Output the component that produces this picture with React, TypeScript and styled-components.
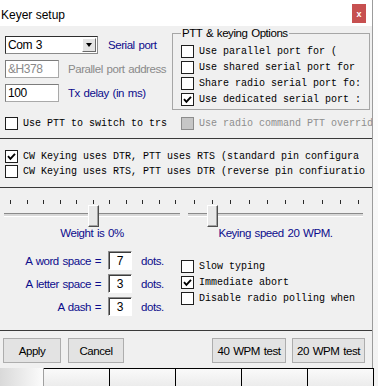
import React from 'react';
import styled, { createGlobalStyle } from 'styled-components';

const GlobalStyle = createGlobalStyle`
  html, body {
    margin: 0;
    padding: 0;
    background: #fff;
  }
  body {
    font-family: "Liberation Sans", Arial, sans-serif;
    color: #000;
  }
`;

const Screen = styled.div`
  width: 378px;
  height: 386px;
  overflow: hidden;
  display: flex;
  flex-direction: column;
`;

const TopArea = styled.div`
  display: flex;
  height: 368px;
  flex-shrink: 0;
`;

const Dialog = styled.div`
  width: 373px;
  box-sizing: border-box;
  border-right: 1px solid #9c9c9c;
  background: #f0f0f0;
  display: flex;
  flex-direction: column;
  flex-shrink: 0;
`;

const SideStrip = styled.div`
  flex: 1;
  background: linear-gradient(#ffffff, #f3f3f3);
`;

const TitleBar = styled.div`
  height: 26px;
  flex-shrink: 0;
  background: #fff;
  display: flex;
  justify-content: space-between;
  align-items: flex-start;
  padding: 0 6px 0 1px;
  box-sizing: border-box;
`;

const Title = styled.div`
  font-size: 12px;
  line-height: 14px;
  margin-top: 8px;
`;

const CloseButton = styled.div`
  width: 14px;
  height: 19px;
  margin-top: 4px;
  background: #c75050;
  color: #fff;
  font: bold 9px "Liberation Sans", Arial, sans-serif;
  display: flex;
  align-items: center;
  justify-content: center;
`;

const Rule = styled.div`
  height: 1px;
  flex-shrink: 0;
  background: #3a3a3a;
`;

const Label = styled.span<{ $tone?: 'blue' | 'gray' | 'black' }>`
  font-size: 11.5px;
  letter-spacing: -0.45px;
  word-spacing: 1px;
  white-space: nowrap;
  color: ${p => (p.$tone === 'gray' ? '#8a8a8a' : p.$tone === 'black' ? '#000' : '#0c0c8c')};
`;

const MonoText = styled.span<{ $disabled?: boolean }>`
  font-family: "Liberation Mono", "DejaVu Sans Mono", monospace;
  font-size: 10px;
  white-space: nowrap;
  overflow: hidden;
  color: ${p => (p.$disabled ? '#8e8e8e' : '#000')};
`;

const CheckRow = styled.div<{ $h?: number; $w?: number }>`
  display: flex;
  align-items: center;
  height: ${p => p.$h ?? 16}px;
  width: ${p => (p.$w ? `${p.$w}px` : 'auto')};
  overflow: hidden;
  flex-shrink: 0;
`;

const Box = styled.span<{ $disabled?: boolean }>`
  width: 13px;
  height: 13px;
  box-sizing: border-box;
  flex-shrink: 0;
  margin-right: 5px;
  border: 1px solid ${p => (p.$disabled ? '#8c8c8c' : '#1e1e1e')};
  background: ${p => (p.$disabled ? '#c6c6c6' : '#fff')};
  display: flex;
  align-items: center;
  justify-content: center;
`;

type CheckProps = {
  text: string;
  checked?: boolean;
  disabled?: boolean;
  h?: number;
  w?: number;
};

const Check = ({ text, checked, disabled, h, w }: CheckProps) => (
  <CheckRow $h={h} $w={w}>
    <Box $disabled={disabled}>
      {checked && (
        <svg width="9" height="9" viewBox="0 0 9 9">
          <polyline points="1,4.2 3.4,6.8 8,1.8" fill="none" stroke="#000" strokeWidth="1.9" />
        </svg>
      )}
    </Box>
    <MonoText $disabled={disabled}>{text}</MonoText>
  </CheckRow>
);

/* --- port section --- */

const PortSection = styled.div`
  height: 112px;
  flex-shrink: 0;
  box-sizing: border-box;
  padding: 1px 0 0 5px;
`;

const TopRow = styled.div`
  display: flex;
`;

const PortColumn = styled.div`
  width: 167px;
  padding-top: 9px;
  display: flex;
  flex-direction: column;
  gap: 6px;
`;

const FieldRow = styled.div<{ $gap: number }>`
  display: flex;
  align-items: center;
  gap: ${p => p.$gap}px;
  height: 18px;
`;

const Combo = styled.div`
  width: 93px;
  height: 18px;
  box-sizing: border-box;
  border: 1px solid #8a8a8a;
  border-top-color: #2e2e2e;
  border-left-color: #2e2e2e;
  background: #fff;
  display: flex;
  align-items: center;
`;

const ComboText = styled.span`
  flex: 1;
  padding-left: 2px;
  font-size: 12px;
  letter-spacing: -0.45px;
  word-spacing: 1px;
`;

const ComboArrow = styled.span`
  width: 14px;
  height: 14px;
  margin-right: 1px;
  box-sizing: border-box;
  background: #e4e4e4;
  border: 1px solid;
  border-color: #fff #6a6a6a #6a6a6a #fff;
  display: flex;
  align-items: center;
  justify-content: center;
  &::after {
    content: '';
    width: 0;
    height: 0;
    border-left: 3.5px solid transparent;
    border-right: 3.5px solid transparent;
    border-top: 4px solid #000;
  }
`;

const TextField = styled.input<{ $disabled?: boolean }>`
  width: 54px;
  height: 18px;
  box-sizing: border-box;
  margin: 0;
  padding: 0 2px;
  border: 1px solid #a9a9a9;
  border-top-color: #7c7c7c;
  border-left-color: #7c7c7c;
  background: #fff;
  font: 12px "Liberation Sans", Arial, sans-serif;
  letter-spacing: -0.45px;
  color: ${p => (p.$disabled ? '#8a8a8a' : '#000')};
  outline: none;
`;

const Group = styled.fieldset`
  margin: 0;
  width: 198px;
  height: 83px;
  box-sizing: border-box;
  padding: 3px 8px 0 8px;
  border: 1px solid #a6a6a6;
  min-width: 0;
  overflow: hidden;
`;

const GroupLegend = styled.legend`
  padding: 0 1px;
  font-size: 11.5px;
  line-height: 13px;
  letter-spacing: -0.45px;
  word-spacing: 1px;
  color: #000;
`;

const PttRow = styled.div`
  display: flex;
  margin-top: 6px;
`;

const Gap = styled.div<{ $w: number }>`
  width: ${p => p.$w}px;
  flex-shrink: 0;
`;

/* --- pin section --- */

const PinSection = styled.div`
  height: 48px;
  flex-shrink: 0;
  box-sizing: border-box;
  padding: 10px 0 0 5px;
`;

/* --- slider section --- */

const SliderSection = styled.div`
  height: 60px;
  flex-shrink: 0;
  box-sizing: border-box;
  padding: 12px 0 0 4px;
  display: flex;
  gap: 8px;
`;

const SliderBox = styled.div<{ $w: number }>`
  width: ${p => p.$w}px;
  display: flex;
  flex-direction: column;
`;

const Ticks = styled.div<{ $pl: number; $pr: number }>`
  height: 4px;
  display: flex;
  justify-content: space-between;
  padding: 0 ${p => p.$pr}px 0 ${p => p.$pl}px;
`;

const Tick = styled.span`
  width: 1px;
  height: 4px;
  background: #2a2a2a;
`;

const TrackArea = styled.div`
  position: relative;
  height: 22px;
  margin-top: 1px;
`;

const Groove = styled.div`
  margin-top: 8px;
  height: 4px;
  box-sizing: border-box;
  border-top: 1px solid #8a8a8a;
  border-bottom: 1px solid #fff;
  background: #d8d8d8;
`;

const Thumb = styled.div`
  position: absolute;
  top: 0;
  width: 11px;
  height: 22px;
  box-sizing: border-box;
  background: #e8e8e8;
  border: 1px solid;
  border-color: #fff #4e4e4e #4e4e4e #fff;
  box-shadow: inset -1px -1px 0 #a2a2a2;
`;

const SliderCaption = styled(Label)`
  display: block;
  text-align: center;
  line-height: 12px;
`;

type SliderProps = {
  w: number;
  ticks: number;
  at: number;
  caption: string;
};

const PAD_L = 6;
const PAD_R = 4;

const Slider = ({ w, ticks, at, caption }: SliderProps) => {
  const span = w - PAD_L - PAD_R - 1;
  const left = PAD_L + (at / (ticks - 1)) * span - 5;
  return (
    <SliderBox $w={w}>
      <Ticks $pl={PAD_L} $pr={PAD_R}>
        {Array.from({ length: ticks }, (_, i) => (
          <Tick key={i} />
        ))}
      </Ticks>
      <TrackArea>
        <Groove />
        <Thumb style={{ left }} />
      </TrackArea>
      <SliderCaption>{caption}</SliderCaption>
    </SliderBox>
  );
};

/* --- spacing section --- */

const SpacingSection = styled.div`
  height: 82px;
  flex-shrink: 0;
  box-sizing: border-box;
  padding-top: 3px;
  display: flex;
`;

const SpacingGrid = styled.div`
  width: 181px;
  display: grid;
  grid-template-columns: 101px 24px auto;
  grid-auto-rows: 19px;
  column-gap: 7px;
  row-gap: 4px;
  align-items: center;
  align-content: start;
`;

const RightLabel = styled(Label)`
  text-align: right;
`;

const Dots = styled(Label)`
  margin-left: 2px;
`;

const DotsField = styled.div`
  width: 24px;
  height: 19px;
  box-sizing: border-box;
  border: 1px solid;
  border-color: #8c8c8c #fff #fff #8c8c8c;
  box-shadow: inset 1px 1px 0 #3c3c3c;
  background: #fff;
  font-size: 12px;
  display: flex;
  align-items: center;
  justify-content: center;
  padding-top: 1px;
`;

const OptionColumn = styled.div`
  padding-top: 7px;
  display: flex;
  flex-direction: column;
`;

/* --- buttons --- */

const ButtonBar = styled.div`
  height: 37px;
  flex-shrink: 0;
  box-sizing: border-box;
  padding: 7px 7px 5px 3px;
  display: flex;
  align-items: flex-start;
`;

const Button = styled.button<{ $w: number; $gap?: number }>`
  width: ${p => p.$w}px;
  height: 25px;
  margin: 0 0 0 ${p => p.$gap ?? 0}px;
  padding: 0;
  box-sizing: border-box;
  border: 1px solid #adadad;
  background: #e3e3e3;
  font: 11.5px "Liberation Sans", Arial, sans-serif;
  letter-spacing: -0.45px;
  word-spacing: 1px;
  color: #000;
`;

const Spacer = styled.div`
  flex: 1;
`;

/* --- sheet behind the dialog --- */

const SheetStrip = styled.div`
  height: 18px;
  display: flex;
  background: #f3f3f3;
`;

const RowHeader = styled.div`
  width: 43px;
  flex-shrink: 0;
  background: linear-gradient(90deg, #d9d9d9, #fbfbfb);
  border-right: 1px solid #a0a0a0;
`;

const Cell = styled.div`
  width: 65px;
  flex-shrink: 0;
  border-top: 1px solid #000;
  border-right: 1px solid #000;
  background: linear-gradient(#fafafa, #ececec);
`;

export default function App() {
  return (
    <>
      <GlobalStyle />
      <Screen>
        <TopArea>
          <Dialog>
            <TitleBar>
              <Title>Keyer setup</Title>
              <CloseButton>x</CloseButton>
            </TitleBar>

            <PortSection>
              <TopRow>
                <PortColumn>
                  <FieldRow $gap={10}>
                    <Combo>
                      <ComboText>Com 3</ComboText>
                      <ComboArrow />
                    </Combo>
                    <Label>Serial port</Label>
                  </FieldRow>
                  <FieldRow $gap={9}>
                    <TextField $disabled readOnly defaultValue="&H378" />
                    <Label $tone="gray">Parallel port address</Label>
                  </FieldRow>
                  <FieldRow $gap={9}>
                    <TextField readOnly defaultValue="100" />
                    <Label>Tx delay (in ms)</Label>
                  </FieldRow>
                </PortColumn>
                <Group>
                  <GroupLegend>PTT &amp; keying Options</GroupLegend>
                  <Check text="Use parallel port for (" />
                  <Check text="Use shared serial port for" />
                  <Check text="Share radio serial port fo:" />
                  <Check text="Use dedicated serial port :" checked />
                </Group>
              </TopRow>
              <PttRow>
                <Check text="Use PTT to switch to trs" h={14} w={162} />
                <Gap $w={14} />
                <Check text="Use radio command PTT overrid" h={14} w={191} disabled />
              </PttRow>
            </PortSection>

            <Rule />

            <PinSection>
              <Check text="CW Keying uses DTR, PTT uses RTS (standard pin configura" h={15} w={361} checked />
              <Check text="CW Keying uses RTS, PTT uses DTR (reverse pin confiuratio" h={15} w={361} />
            </PinSection>

            <Rule />

            <SliderSection>
              <Slider w={176} ticks={11} at={5} caption="Weight is 0%" />
              <Slider w={175} ticks={10} at={1} caption="Keying speed 20 WPM." />
            </SliderSection>

            <SpacingSection>
              <SpacingGrid>
                <RightLabel>A word space =</RightLabel>
                <DotsField>7</DotsField>
                <Dots>dots.</Dots>
                <RightLabel>A letter space =</RightLabel>
                <DotsField>3</DotsField>
                <Dots>dots.</Dots>
                <RightLabel>A dash =</RightLabel>
                <DotsField>3</DotsField>
                <Dots>dots.</Dots>
              </SpacingGrid>
              <OptionColumn>
                <Check text="Slow typing" />
                <Check text="Immediate abort" checked />
                <Check text="Disable radio polling when" />
              </OptionColumn>
            </SpacingSection>

            <Rule />

            <ButtonBar>
              <Button $w={58}>Apply</Button>
              <Button $w={56} $gap={7}>Cancel</Button>
              <Spacer />
              <Button $w={74}>40 WPM test</Button>
              <Button $w={73} $gap={6}>20 WPM test</Button>
            </ButtonBar>
          </Dialog>
          <SideStrip />
        </TopArea>
        <SheetStrip>
          <RowHeader />
          <Cell />
          <Cell />
          <Cell />
          <Cell />
          <Cell />
        </SheetStrip>
      </Screen>
    </>
  );
}
